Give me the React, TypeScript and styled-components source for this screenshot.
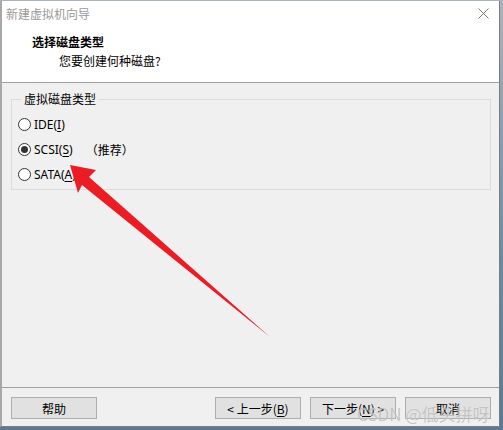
import styled, { createGlobalStyle } from 'styled-components'

const GlobalStyle = createGlobalStyle`
  html, body {
    margin: 0;
    padding: 0;
    background: #8a99a8;
  }
  body {
    font-family: "Noto Sans", "Noto Sans CJK SC", sans-serif;
    font-size: 12px;
    color: #000;
  }
`

const Desktop = styled.div`
  position: relative;
  width: 503px;
  height: 430px;
  padding: 1px 3px 3px 0;
  box-sizing: border-box;
  background: linear-gradient(180deg, #a9b4bd 0%, #6f8aa0 60%, #5b7894 100%);
  overflow: hidden;
`

const Window = styled.div`
  width: 500px;
  height: 426px;
  box-sizing: border-box;
  border-left: 2px solid #a8a8a8;
  border-right: 1px solid #7d7d7d;
  border-bottom: 1px solid #7d7d7d;
  background: #f0f0f0;
  display: flex;
  flex-direction: column;
`

const Header = styled.div`
  background: #fff;
  height: 81px;
  border-bottom: 1px solid #a0a0a0;
  display: flex;
  flex-direction: column;
`

const TitleBar = styled.div`
  height: 24px;
  display: flex;
  align-items: center;
  justify-content: space-between;
  padding: 0 10px 0 4px;
  color: #999;
  font-family: "Noto Sans CJK SC", sans-serif;
  font-size: 12px;
`

const Close = styled.svg`
  width: 11px;
  height: 11px;
`

const Heading = styled.div`
  margin: 8px 0 0 30px;
  font-family: "Noto Sans CJK SC", sans-serif;
  font-weight: 700;
  font-size: 12px;
  line-height: 18px;
`

const Subtitle = styled.div`
  margin: 1px 0 0 57px;
  font-family: "Noto Sans CJK SC", sans-serif;
  font-size: 12px;
  line-height: 18px;
`

const Body = styled.div`
  flex: 1;
  padding: 9px 8px 0 9px;
`

const Group = styled.fieldset`
  margin: 0;
  padding: 10px 0 6px 6px;
  border: 1px solid #dcdcdc;
  height: 80px;
  display: flex;
  flex-direction: column;
  gap: 7px;

  legend {
    padding: 0 2px;
    margin-left: 4px;
    font-family: "Noto Sans CJK SC", sans-serif;
    font-size: 12px;
    line-height: 14px;
  }
`

const Option = styled.label`
  display: flex;
  align-items: center;
  gap: 3px;
  height: 19px;
  font-family: "Noto Sans", "Noto Sans CJK SC", sans-serif;
  font-size: 12px;

  u {
    text-underline-offset: 2px;
  }
`

const Radio = styled.span<{ $checked?: boolean }>`
  width: 11px;
  height: 11px;
  border-radius: 50%;
  border: 1px solid #333;
  background: #fff;
  display: flex;
  align-items: center;
  justify-content: center;

  &::after {
    content: '';
    width: 7px;
    height: 7px;
    border-radius: 50%;
    background: ${p => (p.$checked ? '#333' : 'transparent')};
  }
`

const Hint = styled.span`
  margin-left: 10px;
  font-family: "Noto Sans CJK SC", sans-serif;
`

const Footer = styled.div`
  height: 39px;
  border-top: 1px solid #a0a0a0;
  padding: 9px 8px 0 9px;
  box-sizing: border-box;
  display: flex;
  gap: 9px;
`

const Button = styled.button`
  width: 86px;
  height: 22px;
  margin: 0;
  padding: 0;
  background: #e1e1e1;
  border: 1px solid #adadad;
  font-family: "Noto Sans CJK SC", sans-serif;
  font-size: 12px;
  color: #000;

  u {
    text-underline-offset: 2px;
  }
`

const Spacer = styled.div`
  flex: 1;
`

const Arrow = styled.svg`
  position: absolute;
  left: 0;
  top: 0;
  pointer-events: none;
`

const Watermark = styled.div`
  position: absolute;
  left: 357px;
  top: 401px;
  font-family: "Noto Sans CJK SC", sans-serif;
  font-size: 17px;
  color: rgba(150, 150, 150, 0.55);
  text-shadow: 0 0 1px rgba(255, 255, 255, 0.8);
  pointer-events: none;
`

export default function App() {
  return (
    <Desktop>
      <GlobalStyle />
      <Window>
        <Header>
          <TitleBar>
            <span>新建虚拟机向导</span>
            <Close viewBox="0 0 11 11">
              <path d="M0.5 0.5 L10.5 10.5 M10.5 0.5 L0.5 10.5" stroke="#777" strokeWidth="1" />
            </Close>
          </TitleBar>
          <Heading>选择磁盘类型</Heading>
          <Subtitle>您要创建何种磁盘?</Subtitle>
        </Header>
        <Body>
          <Group>
            <legend>虚拟磁盘类型</legend>
            <Option>
              <Radio />
              <span>IDE(<u>I</u>)</span>
            </Option>
            <Option>
              <Radio $checked />
              <span>SCSI(<u>S</u>)</span>
              <Hint>（推荐）</Hint>
            </Option>
            <Option>
              <Radio />
              <span>SATA(<u>A</u>)</span>
            </Option>
          </Group>
        </Body>
        <Footer>
          <Button>帮助</Button>
          <Spacer />
          <Button>&lt; 上一步(<u>B</u>)</Button>
          <Button>下一步(<u>N</u>) &gt;</Button>
          <Button>取消</Button>
        </Footer>
      </Window>
      <Arrow width="503" height="430" viewBox="0 0 503 430">
        <polygon
          points="70,165 96,170 89,177 270,337 82,185 78,193"
          fill="#ec1c24"
        />
      </Arrow>
      <Watermark>CSDN @低头拼呀</Watermark>
    </Desktop>
  )
}
